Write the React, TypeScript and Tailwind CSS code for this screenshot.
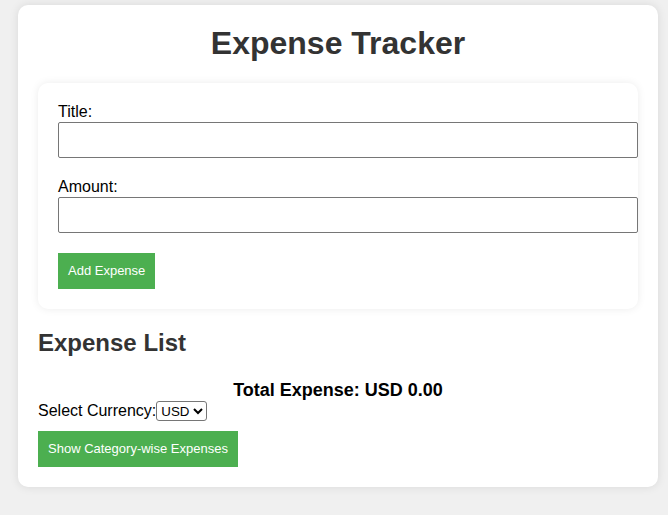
export default function App() {
  return (
    <div className="min-h-screen bg-[#f0f0f0] pt-[5px] font-['Liberation_Sans',Arial,sans-serif]">
      <div className="ml-[18px] w-[640px] bg-white rounded-[10px] shadow-[0_0_10px_rgba(0,0,0,0.1)] p-5">
        <h1 className="text-[32px] font-bold text-[#333] text-center leading-[37px] mb-[21px]">Expense Tracker</h1>

        {/* form card */}
        <div className="bg-white rounded-[10px] shadow-[0_0_8px_rgba(0,0,0,0.08)] pl-5 py-5">
          <label className="block text-base leading-[18px] text-black">Title:</label>
          <input type="text" className="block mt-px w-full h-9 border border-[#767676] rounded-[2px] bg-white" />

          <label className="block mt-5 text-base leading-[18px] text-black">Amount:</label>
          <input type="text" className="block mt-px w-full h-9 border border-[#767676] rounded-[2px] bg-white" />

          <button className="mt-5 h-9 px-[10px] bg-[#4CAF50] text-white text-[13px]">Add Expense</button>
        </div>

        <h2 className="mt-5 text-2xl font-bold text-[#333] leading-[28px]">Expense List</h2>

        <div className="mt-[23px] text-center text-[18px] font-bold text-black leading-[21px]">Total Expense: USD 0.00</div>

        <div className="flex items-center text-base text-black leading-[20px]">
          <span>Select Currency:</span>
          <select className="h-5 border border-[#767676] rounded-[3px] text-[13.33px] bg-white text-black">
            <option>USD</option>
            <option>EUR</option>
            <option>INR</option>
          </select>
        </div>

        <button className="mt-[10px] h-9 px-[10px] bg-[#4CAF50] text-white text-[13px]">Show Category-wise Expenses</button>
      </div>
    </div>
  );
}
